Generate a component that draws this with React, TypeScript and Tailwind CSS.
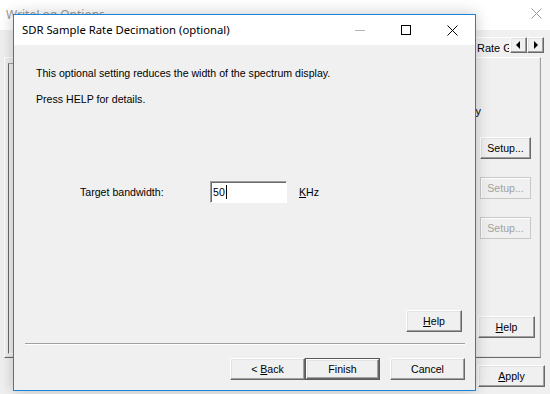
import React from 'react';

const raised =
  'border border-t-white border-l-white border-r-[#696969] border-b-[#696969] shadow-[inset_-1px_-1px_#a0a0a0,inset_1px_1px_#e3e3e3]';

function WinButton({
  children,
  className = '',
  isDefault = false,
  disabled = false,
}: {
  children: React.ReactNode;
  className?: string;
  isDefault?: boolean;
  disabled?: boolean;
}) {
  if (isDefault) {
    return (
      <div className={`h-[22px] w-[75px] border border-[#5a5a5a] bg-[#f0f0f0] ${className}`}>
        <div className={`flex h-full w-full items-center justify-center ${raised}`}>{children}</div>
      </div>
    );
  }
  return (
    <div
      className={`flex h-[22px] items-center justify-center bg-[#f0f0f0] ${
        disabled
          ? 'border border-[#c8c8c8] text-[#a0a0a0] shadow-[inset_1px_1px_white]'
          : raised
      } ${className}`}
    >
      {children}
    </div>
  );
}

function ArrowBtn({ dir }: { dir: 'left' | 'right' }) {
  return (
    <div className={`flex h-[16px] w-[17px] items-center justify-center bg-[#f0f0f0] ${raised}`}>
      <svg width="5" height="8" viewBox="0 0 5 8">
        {dir === 'left' ? <polygon points="4,0 4,8 0,4" fill="#000" /> : <polygon points="1,0 1,8 5,4" fill="#000" />}
      </svg>
    </div>
  );
}

export default function App() {
  return (
    <div className="relative h-[394px] w-[550px] overflow-hidden bg-[#f0f0f0] font-['Liberation_Sans',Arial,sans-serif] text-[10.6px] leading-[14px] text-black">
      {/* Background window: WriteLog Options */}
      <div className="flex h-full flex-col">
        <div className="flex h-[30px] items-start justify-between bg-white pl-[6px] pr-[8px] pt-[7px]">
          <span className="font-['Noto_Sans',sans-serif] text-[12px] leading-[16px] text-[#9a9a9a]">WriteLog Options</span>
          <svg width="11" height="11" viewBox="0 0 11 11" className="mt-[1px]">
            <path d="M0.5 0.5 L10.5 10.5 M10.5 0.5 L0.5 10.5" stroke="#9a9a9a" strokeWidth="1" />
          </svg>
        </div>

        <div className="flex h-[20px] items-start justify-end pr-[6px] pt-[7px]">
          <div className="mr-[1px] flex h-[20px] w-[36px] items-center overflow-hidden whitespace-nowrap border-l border-t border-white pl-[3px] text-[11px]">
            Rate G
          </div>
          <div className="flex">
            <ArrowBtn dir="left" />
            <ArrowBtn dir="right" />
          </div>
        </div>

        <div className="ml-[4px] mt-[7px] flex h-[301px] w-[537px] border border-t-white border-l-white border-r-[#a0a0a0] border-b-[#696969] shadow-[inset_-1px_-1px_#e3e3e3]">
          <div className="ml-[3px] mb-[3px] mt-[5px] w-[440px] border border-t-[#a0a0a0] border-l-[#696969] border-r-white border-b-white" />
          <div className="flex flex-col">
            <div className="mt-[46px] flex w-[33px] justify-end overflow-hidden whitespace-nowrap text-[11px]">frequency</div>
            <WinButton className="ml-[32px] mt-[19px] w-[51px]">Setup...</WinButton>
            <WinButton disabled className="ml-[32px] mt-[18px] w-[51px]">Setup...</WinButton>
            <WinButton disabled className="ml-[32px] mt-[18px] w-[51px]">Setup...</WinButton>
            <WinButton className="ml-[30px] mt-[77px] w-[57px]">
              <span className="underline">H</span>elp
            </WinButton>
          </div>
        </div>

        <WinButton className="ml-[478px] mt-[7px] w-[67px]">
          <span className="underline">A</span>pply
        </WinButton>
      </div>

      {/* Dialog on top */}
      <div className="absolute left-[13px] top-[14px] flex h-[377px] w-[463px] flex-col border border-[#1883d7] shadow-[0_0_14px_rgba(0,0,0,0.22)]">
        <div className="flex h-[30px] items-center bg-white">
          <span className="pl-[8px] font-['Noto_Sans',sans-serif] text-[11.3px] leading-[16px]">
            SDR Sample Rate Decimation (optional)
          </span>
          <div className="ml-auto flex h-full">
            <div className="flex w-[46px] items-center justify-center">
              <div className="h-px w-[10px] bg-[#b4b4b4]" />
            </div>
            <div className="flex w-[46px] items-center justify-center">
              <div className="h-[10px] w-[10px] border border-black" />
            </div>
            <div className="flex w-[46px] items-center justify-center">
              <svg width="11" height="11" viewBox="0 0 11 11">
                <path d="M0.5 0.5 L10.5 10.5 M10.5 0.5 L0.5 10.5" stroke="#000" strokeWidth="1" />
              </svg>
            </div>
          </div>
        </div>

        <div className="flex flex-1 flex-col bg-[#f0f0f0] pb-[10px]">
          <p className="pl-[22px] pt-[21px]">This optional setting reduces the width of the spectrum display.</p>
          <p className="mt-[12px] pl-[22px]">Press HELP for details.</p>

          <div className="mt-[75px] flex h-[22px] items-center pl-[66px]">
            <span className="w-[130px]">Target bandwidth:</span>
            <div className="flex h-[22px] w-[77px] items-center border border-t-[#a0a0a0] border-l-[#a0a0a0] border-r-white border-b-white bg-white pl-[2px] shadow-[inset_1px_1px_#696969]">
              <span>50</span>
              <span className="ml-px h-[14px] w-px bg-black" />
            </div>
            <span className="ml-[12px]">
              <span className="underline">K</span>Hz
            </span>
          </div>

          <div className="flex-1" />

          <div className="flex justify-end pr-[13px]">
            <WinButton className="w-[56px]">
              <span className="underline">H</span>elp
            </WinButton>
          </div>

          <div className="ml-[11px] mr-[10px] mt-[11px] border-t border-b border-t-[#a0a0a0] border-b-white" />

          <div className="mt-[13px] flex justify-end pr-[10px]">
            <WinButton className="w-[75px]">
              &lt;&nbsp;<span className="underline">B</span>ack
            </WinButton>
            <WinButton isDefault>Finish</WinButton>
            <WinButton className="ml-[10px] w-[75px]">Cancel</WinButton>
          </div>
        </div>
      </div>
    </div>
  );
}
